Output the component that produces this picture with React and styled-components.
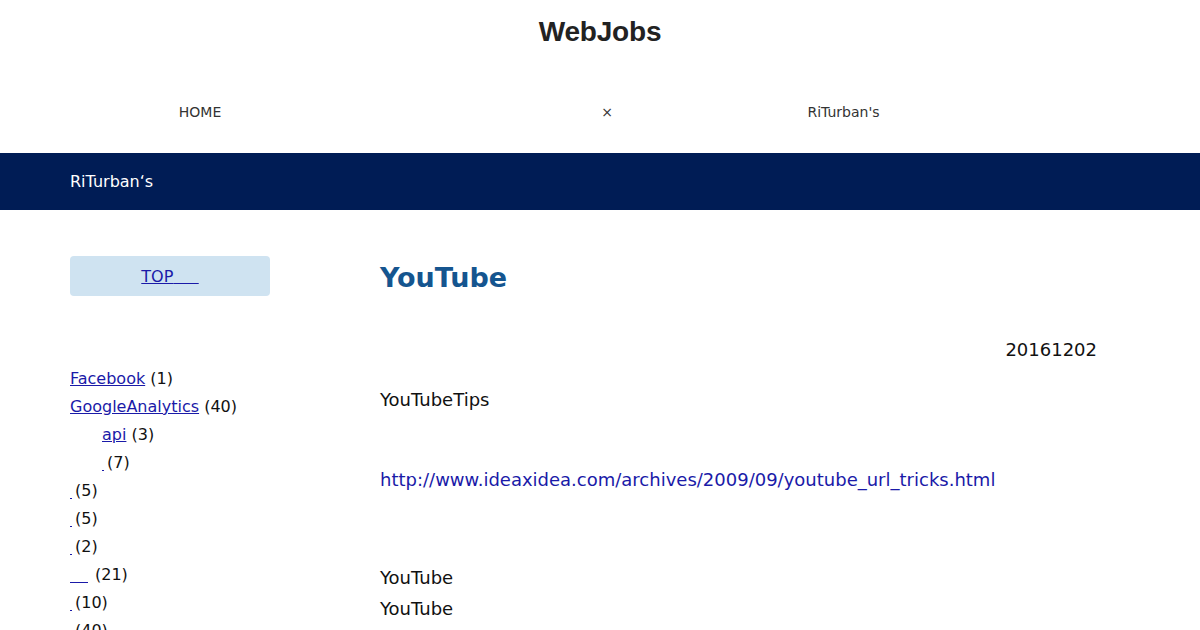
import React from 'react'
import styled, { createGlobalStyle } from 'styled-components'

const Global = createGlobalStyle`
  body {
    margin: 0;
    background: #fff;
    font-family: "DejaVu Sans", Verdana, sans-serif;
    color: #111;
  }
`

const Header = styled.header`
  display: flex;
  flex-direction: column;
  align-items: center;
  padding-top: 14px;
`

const Logo = styled.div`
  font-family: "Liberation Sans", Arial, sans-serif;
  font-weight: 700;
  font-size: 28px;
  line-height: 36px;
  color: #222;
  letter-spacing: -0.2px;
`

const Nav = styled.nav`
  align-self: stretch;
  display: flex;
  padding: 21px 70px 0;
  height: 103px;
  box-sizing: border-box;
  align-items: center;
`

const NavItem = styled.a`
  width: ${p => p.$w}px;
  margin-left: ${p => p.$ml || 0}px;
  text-align: center;
  font-size: 14px;
  color: #333;
  text-decoration: none;
`

const Band = styled.div`
  background: #001c55;
  color: #fff;
  height: 57px;
  display: flex;
  align-items: center;
  padding-left: 70px;
  font-size: 16px;
`

const Main = styled.main`
  display: flex;
  padding: 46px 70px 0;
`

const Side = styled.aside`
  width: 200px;
  flex-shrink: 0;
  margin-right: 110px;
`

const TopBtn = styled.div`
  height: 40px;
  border-radius: 4px;
  background: #cfe3f1;
  display: flex;
  align-items: center;
  justify-content: center;
`

const Link = styled.a`
  color: #1a1aa8;
  text-decoration: underline;
  font-size: 16px;
`

const CatList = styled.ul`
  list-style: none;
  margin: 69px 0 0;
  padding: 0;
`

const Cat = styled.li`
  line-height: 28px;
  font-size: 16px;
  padding-left: ${p => (p.$sub ? 32 : 0)}px;
  white-space: nowrap;
`

const Stub = styled.a`
  display: inline-block;
  width: ${p => p.$w || 2}px;
  height: 1px;
  background: #1a1aa8;
  vertical-align: -3px;
  margin-right: ${p => (p.$w ? 7 : 3)}px;
`

const Content = styled.article`
  flex: 1;
  max-width: 717px;
`

const Title = styled.h1`
  margin: 5px 0 0;
  font-size: 27px;
  line-height: 33px;
  font-weight: 700;
  color: #15558f;
`

const DateLine = styled.div`
  margin-top: 42px;
  text-align: right;
  font-size: 18px;
  line-height: 28px;
`

const Para = styled.p`
  margin: ${p => p.$mt}px 0 0;
  font-size: 18px;
  line-height: ${p => p.$lh || 28}px;
`

const UrlLink = styled.a`
  color: #1a1aa8;
  text-decoration: none;
`

const cats = [
  { name: 'Facebook', n: 1 },
  { name: 'GoogleAnalytics', n: 40 },
  { name: 'api', n: 3, sub: true },
  { n: 7, sub: true },
  { n: 5 },
  { n: 5 },
  { n: 2 },
  { n: 21, w: 18 },
  { n: 10 },
  { n: 40 },
]

const App = () => {
  return (
    <>
      <Global />
      <Header>
        <Logo>WebJobs</Logo>
        <Nav>
          <NavItem href="#" $w={260}>HOME</NavItem>
          <NavItem href="#" $w={266} $ml={144}>×</NavItem>
          <NavItem href="#" $w={207}>RiTurban's</NavItem>
        </Nav>
      </Header>
      <Band>RiTurban‘s</Band>
      <Main>
        <Side>
          <TopBtn>
            <Link href="#">TOP{'\u00a0\u00a0\u00a0\u00a0\u00a0'}</Link>
          </TopBtn>
          <CatList>
            {cats.map((c, i) => (
              <Cat key={i} $sub={c.sub}>
                {c.name ? (
                  <>
                    <Link href="#">{c.name}</Link> ({c.n})
                  </>
                ) : (
                  <>
                    <Stub href="#" $w={c.w} />({c.n})
                  </>
                )}
              </Cat>
            ))}
          </CatList>
        </Side>
        <Content>
          <Title>YouTube</Title>
          <DateLine>20161202</DateLine>
          <Para $mt={22}>YouTubeTips</Para>
          <Para $mt={52}>
            <UrlLink href="#">http://www.ideaxidea.com/archives/2009/09/youtube_url_tricks.html</UrlLink>
          </Para>
          <Para $mt={68} $lh={31}>
            YouTube
            <br />
            YouTube
          </Para>
        </Content>
      </Main>
    </>
  )
}

export default App
